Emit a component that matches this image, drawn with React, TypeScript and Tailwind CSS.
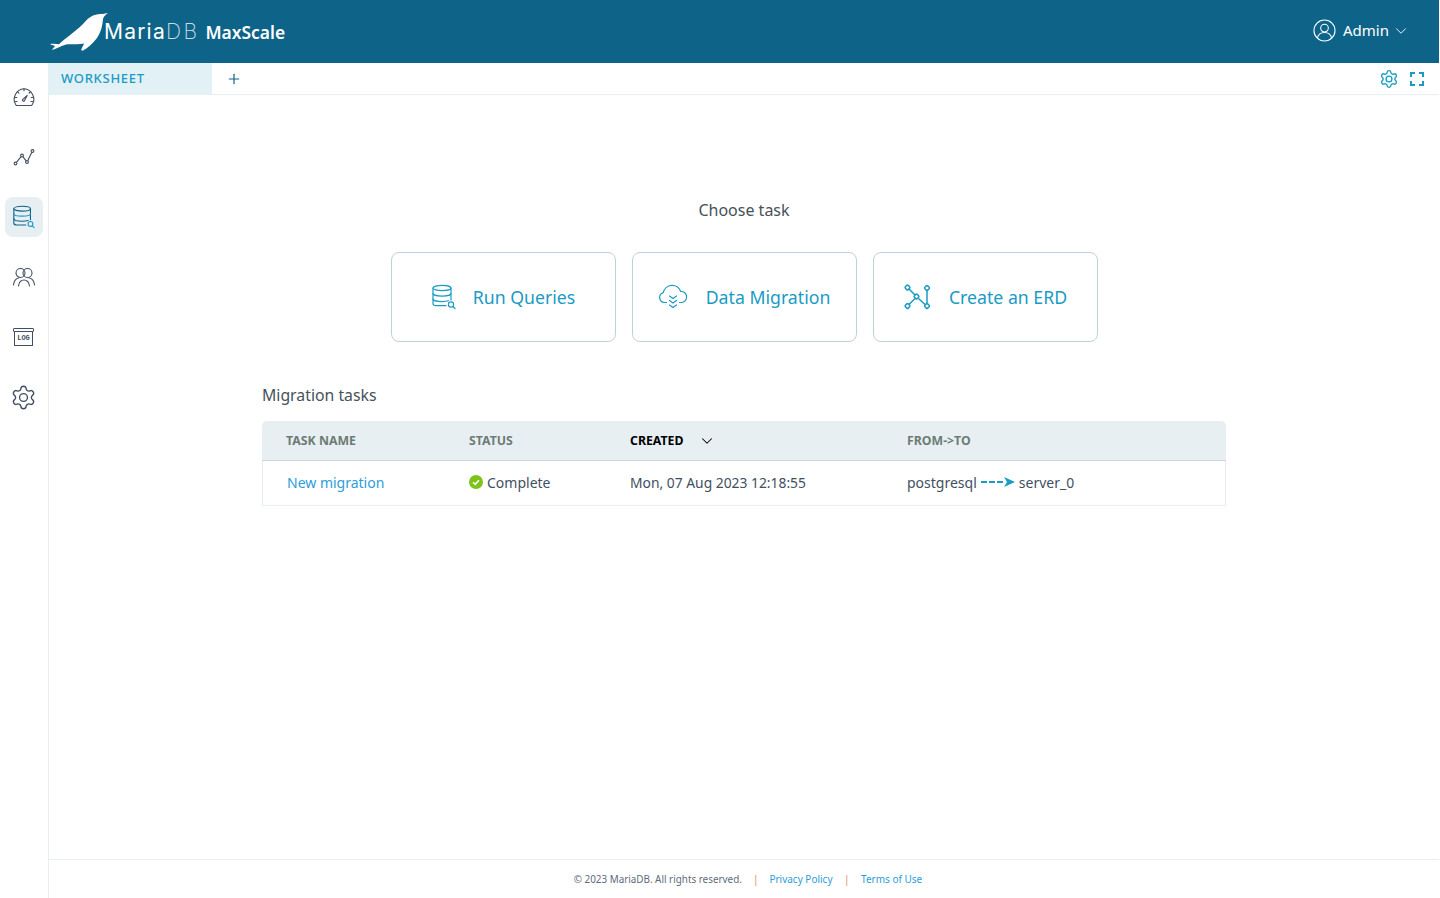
import React from "react";
import { ChevronDown, Plus } from "lucide-react";

const FONT = "font-['Noto_Sans',sans-serif]";

function SpeedIcon() {
    return (
        <svg viewBox="0 0 24 24" className="w-6 h-6" fill="none" stroke="#424f62" strokeWidth="1.1" strokeLinecap="round" strokeLinejoin="round">
            <path d="M5 20.500h14a1.500 1.500 0 0 0 1.200-.7A10.500 10.500 0 0 0 12 3.800a10.500 10.500 0 0 0-8.200 16c.3.4.7.7 1.200.7z" />
            <path d="M12 3.800v2M3 12.500h1.800M19.200 12.500H21M5.700 7l1.200 1.200M17.100 8.200 18.300 7M3.500 16.500h1.600M18.900 16.500h1.600" />
            <path d="M10.600 14.600l4.600-4.200-2.800 5.400a1.100 1.100 0 0 1-1.800-1.200z" />
        </svg>
    );
}

function GraphIcon() {
    return (
        <svg viewBox="0 0 24 24" className="w-6 h-6" fill="none" stroke="#424f62" strokeWidth="1.1">
            <circle cx="3.500" cy="18.500" r="1.400" />
            <circle cx="10" cy="10.500" r="1.400" />
            <circle cx="15" cy="17" r="1.400" />
            <circle cx="20.500" cy="6" r="1.400" />
            <path d="M4.400 17.400l4.700-5.800M10.900 11.600l3.200 4.300M15.700 15.700l4.100-8.400" />
        </svg>
    );
}

function QueryIcon({ stroke, accent, className }: { stroke: string; accent: string; className: string }) {
    return (
        <svg viewBox="0 0 26 26" className={className} fill="none" stroke={stroke} strokeWidth="1.2" strokeLinecap="round">
            <ellipse cx="11" cy="4" rx="9" ry="2.600" />
            <path d="M2 4v15.500c0 1.400 1.500 2.200 3 2.200h10" />
            <path d="M20 4v12" />
            <path d="M2 9.500c0 1.400 4 2.600 9 2.600s9-1.200 9-2.600" stroke={accent} />
            <path d="M2 15c0 1.400 4 2.600 9 2.600 3 0 5-.3 6.500-.8" />
            <circle cx="20" cy="20.500" r="2.600" stroke={accent} />
            <path d="M22 22.500l2 2" stroke={accent} />
        </svg>
    );
}

function UsersIcon() {
    return (
        <svg viewBox="0 0 24 24" className="w-6 h-6" fill="none" stroke="#424f62" strokeWidth="1.1" strokeLinecap="round">
            <circle cx="8.500" cy="8" r="4.500" />
            <circle cx="15.500" cy="8" r="4.500" />
            <path d="M1.500 20c.4-4 2.600-6.500 5.500-7.200M22.500 20c-.4-4-2.600-6.500-5.500-7.200" />
            <path d="M6.500 21c.5-3.500 2.800-6 5.500-6s5 2.500 5.500 6" />
        </svg>
    );
}

function LogsIcon() {
    return (
        <div className="w-[21px] flex flex-col items-center">
            <div className="w-full h-[4px] border border-[#424f62] rounded-[1px]" />
            <div className="w-[19px] h-[14px] border-x-[1.5px] border-b-[1.5px] border-[#424f62] flex items-center justify-center">
                <span className="text-[7px] leading-none font-bold text-[#424f62] font-['Liberation_Mono',monospace]">LOG</span>
            </div>
        </div>
    );
}

function GearIcon({ stroke, strokeWidth, className }: { stroke: string; strokeWidth: number; className: string }) {
    return (
        <svg viewBox="0 0 24 24" className={className} fill="none" stroke={stroke} strokeWidth={strokeWidth} strokeLinecap="round" strokeLinejoin="round">
            <path d="M9.671 4.136a2.34 2.34 0 0 1 4.659 0 2.34 2.34 0 0 0 3.319 1.915 2.34 2.34 0 0 1 2.33 4.033 2.34 2.34 0 0 0 0 3.831 2.34 2.34 0 0 1-2.33 4.033 2.34 2.34 0 0 0-3.319 1.915 2.34 2.34 0 0 1-4.659 0 2.34 2.34 0 0 0-3.32-1.915 2.34 2.34 0 0 1-2.33-4.033 2.34 2.34 0 0 0 0-3.831A2.34 2.34 0 0 1 6.35 6.051a2.34 2.34 0 0 0 3.32-1.915" />
            <circle cx="12" cy="12" r="3.500" />
        </svg>
    );
}

function FullscreenIcon() {
    return (
        <svg viewBox="0 0 14 14" className="w-[14px] h-[14px]" fill="none" stroke="#1a9bc4" strokeWidth="2">
            <path d="M1 5V1h4M9 1h4v4M13 9v4H9M5 13H1V9" />
        </svg>
    );
}

function CloudIcon() {
    return (
        <svg viewBox="0 0 30 28" className="w-[30px] h-[28px]" fill="none" stroke="#1a9bc4" strokeWidth="1.2" strokeLinecap="round" strokeLinejoin="round">
            <path d="M8.500 19.500H6.500a5 5 0 0 1-1.200-9.800 9 9 0 0 1 17.400-1.200 5.500 5.500 0 0 1 .8 11h-2" />
            <path d="M11.500 13l3.500 2.500 3.500-2.500M11.500 17.500l3.500 2.500 3.500-2.500M11.500 22l3.500 2.500 3.500-2.500" />
        </svg>
    );
}

function ErdIcon() {
    return (
        <svg viewBox="0 0 28 28" className="w-7 h-7" fill="none" stroke="#1a9bc4" strokeWidth="1.500">
            <path d="M6 6l6 6M15.500 15.500l6.500 6M12 15.500l-6 6M24 7.500v13" />
            <rect x="2.500" y="2.500" width="4" height="4" rx="1" transform="rotate(45 4.500 4.500)" />
            <rect x="22" y="3" width="4" height="4" rx="1" transform="rotate(45 24 5)" />
            <rect x="11.500" y="11.500" width="4" height="4" rx="1" transform="rotate(45 13.500 13.500)" />
            <rect x="2.500" y="21" width="4" height="4" rx="1" transform="rotate(45 4.500 23)" />
            <rect x="22" y="21" width="4" height="4" rx="1" transform="rotate(45 24 23)" />
        </svg>
    );
}

function Logo() {
    return (
        <svg viewBox="0 0 58 38" className="w-[58px] h-[38px]" fill="#ffffff">
            <path d="M0 31c3-.5 6-.3 9 .3C14 26 25 19 33 11 37 6 42 2 48 1.300 51 1 54 1 58 0 55 2 53.500 4 53 6 52.500 13 51 19 47 25 43 30 38 35 33 37.500 31.500 38 31 37 31.500 36 32.500 33.500 33.500 32.500 34 30.500 28 32 21 30.500 16 31.500 11 32.500 7 36 2 37 3 35 4.500 34 5 33 3.500 32.500 2 32 0 31z" />
        </svg>
    );
}

function TaskCard({ icon, label, gapClass }: { icon: React.ReactNode; label: string; gapClass: string }) {
    return (
        <div className={`w-[225px] h-[90px] border border-[#bed1da] rounded-lg flex items-center justify-center ${gapClass}`}>
            {icon}
            <span className="text-[17.7px] text-[#1a9bc4]">{label}</span>
        </div>
    );
}

function NavItem({ children, active }: { children: React.ReactNode; active?: boolean }) {
    return (
        <div className={`w-[38px] h-[40px] rounded-lg flex items-center justify-center ${active ? "bg-[#e8eff3]" : ""}`}>
            {children}
        </div>
    );
}

export default function App() {
    return (
        <div className={`h-screen w-full pr-px bg-white text-[#424f62] ${FONT}`}>
            <div className="h-full flex flex-col overflow-hidden">
                {/* Top bar */}
                <header className="h-[63px] shrink-0 bg-[#0e6488] flex items-center justify-between pl-[50px] pr-[29px]">
                    <div className="flex items-center">
                        <Logo />
                        <div className="flex items-baseline ml-[-4px]">
                            <span className="text-[21px] leading-none text-white font-['Inter',sans-serif] font-normal tracking-[1.2px]">Maria</span>
                            <span className="text-[21px] leading-none text-[#c9dde6] font-['Inter',sans-serif] font-extralight tracking-[2.5px]">DB</span>
                            <span className="text-[17.4px] leading-none text-white ml-[6px] font-semibold">MaxScale</span>
                        </div>
                    </div>
                    <div className="flex items-center text-white mb-[2px]">
                        <svg viewBox="0 0 24 24" className="w-[23px] h-[23px] mr-[7px]" fill="none" stroke="#ffffff" strokeWidth="1.100">
                            <circle cx="12" cy="12" r="11" />
                            <circle cx="12" cy="9.500" r="4" />
                            <path d="M4.500 20c.8-3.500 3.800-6 7.500-6s6.700 2.500 7.500 6" />
                        </svg>
                        <span className="text-[15px]">Admin</span>
                        <ChevronDown className="w-[18px] h-[18px] ml-[3px]" strokeWidth={1.2} />
                    </div>
                </header>

                <div className="flex-1 flex min-h-0">
                    {/* Sidebar */}
                    <nav className="w-[49px] shrink-0 border-r border-[#e8eff3] flex flex-col items-center pt-[14px] gap-[20px] pr-px">
                        <NavItem><SpeedIcon /></NavItem>
                        <NavItem><GraphIcon /></NavItem>
                        <NavItem active><QueryIcon stroke="#0e6488" accent="#1a9bc4" className="w-6 h-6" /></NavItem>
                        <NavItem><UsersIcon /></NavItem>
                        <NavItem><LogsIcon /></NavItem>
                        <NavItem><GearIcon stroke="#424f62" strokeWidth={1.2} className="w-[27px] h-[27px]" /></NavItem>
                    </nav>

                    <div className="flex-1 flex flex-col min-w-0">
                        {/* Tabs */}
                        <div className="h-[32px] shrink-0 border-b border-[#e8eff3] flex items-center">
                            <div className="w-[163px] h-full bg-[#e1f1f6] flex items-center pl-[12px] text-[13px] tracking-[0.7px] text-[#1a9bc4] font-medium">WORKSHEET</div>
                            <Plus className="w-[16px] h-[16px] ml-[14px] text-[#0e6488]" strokeWidth={1.8} />
                            <div className="ml-auto flex items-center gap-[11px] pr-[15px]">
                                <GearIcon stroke="#1a9bc4" strokeWidth={1.6} className="w-[20px] h-[20px]" />
                                <FullscreenIcon />
                            </div>
                        </div>

                        {/* Main */}
                        <main className="flex-1 flex flex-col items-center pt-[103px]">
                            <h2 className="text-[16px] leading-[24px] font-normal text-[#46525a]">Choose task</h2>
                            <div className="flex gap-[16px] mt-[30px]">
                                <TaskCard gapClass="gap-[16px]" icon={<QueryIcon stroke="#1a9bc4" accent="#1a9bc4" className="w-[26px] h-[26px]" />} label="Run Queries" />
                                <TaskCard gapClass="gap-[18px]" icon={<CloudIcon />} label="Data Migration" />
                                <TaskCard gapClass="gap-[18px]" icon={<ErdIcon />} label="Create an ERD" />
                            </div>

                            <div className="w-[964px] mt-[41px]">
                                <h3 className="text-[15.800px] leading-[24px] font-normal text-[#46525a]">Migration tasks</h3>
                                <div className="mt-[14px] grid grid-cols-[183px_161px_277px_1fr] text-[14px]">
                                    <div className="contents text-[12.300px] font-bold text-[#6c7c74]">
                                        <div className="h-[40px] bg-[#e8eff3] border-b border-[#ccd6db] rounded-tl-[5px] pl-[24px] pt-px flex items-center">TASK NAME</div>
                                        <div className="h-[40px] bg-[#e8eff3] border-b border-[#ccd6db] pl-[24px] pt-px flex items-center">STATUS</div>
                                        <div className="h-[40px] bg-[#e8eff3] border-b border-[#ccd6db] pl-[24px] pt-px flex items-center text-black">
                                            CREATED
                                            <ChevronDown className="w-[18px] h-[18px] ml-[15px]" strokeWidth={1.4} />
                                        </div>
                                        <div className="h-[40px] bg-[#e8eff3] border-b border-[#ccd6db] rounded-tr-[5px] pl-[24px] pt-px flex items-center">FROM-&gt;TO</div>
                                    </div>
                                    <div className="h-[45px] border-b border-l border-[#e8eff3] pl-[24px] pb-[2px] flex items-center text-[#2d9cdb]">New migration</div>
                                    <div className="h-[45px] border-b border-[#e8eff3] pl-[24px] pb-[2px] flex items-center">
                                        <svg viewBox="0 0 14 14" className="w-[14px] h-[14px] mr-[4px]">
                                            <circle cx="7" cy="7" r="7" fill="#7cc41a" />
                                            <path d="M4 7.200l2.200 2.200L10 5.300" fill="none" stroke="#ffffff" strokeWidth="1.600" />
                                        </svg>
                                        Complete
                                    </div>
                                    <div className="h-[45px] border-b border-[#e8eff3] pl-[24px] flex items-center text-[13.850px]">Mon, 07 Aug 2023 12:18:55</div>
                                    <div className="h-[45px] border-b border-r border-[#e8eff3] pl-[24px] pb-[2px] flex items-center">
                                        postgresql
                                        <svg viewBox="0 0 34 10" className="w-[34px] h-[10px] mx-[4px]">
                                            <path d="M0 5h24" stroke="#1a9bc4" strokeWidth="2" strokeDasharray="6 2" fill="none" />
                                            <path d="M23 0l11 5-11 5 3-5z" fill="#1a9bc4" />
                                        </svg>
                                        server_0
                                    </div>
                                </div>
                            </div>
                        </main>

                        {/* Footer */}
                        <footer className="h-[39px] shrink-0 border-t border-[#e8eff3] flex items-center justify-center text-[10px] pl-[8px]">
                            <span className="text-[#5f6b7a] text-[9.900px]">© 2023 MariaDB. All rights reserved.</span>
                            <span className="mx-[11px] text-[#e08b57]">|</span>
                            <span className="text-[#2d9cdb]">Privacy Policy</span>
                            <span className="mx-[11.500px] text-[#e08b57]">|</span>
                            <span className="text-[#2d9cdb]">Terms of Use</span>
                        </footer>
                    </div>
                </div>
            </div>
        </div>
    );
}
